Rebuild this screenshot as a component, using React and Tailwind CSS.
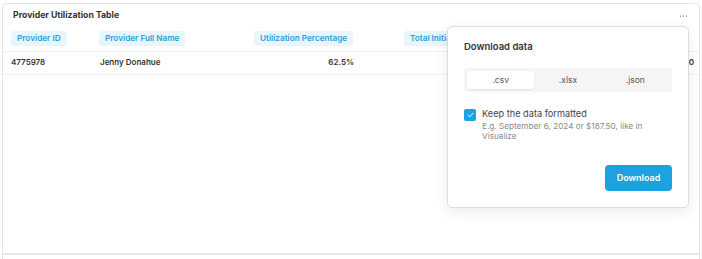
import React from "react";

const font = { fontFamily: "Inter, 'Noto Sans', sans-serif" };

function Pill({ children }) {
  return (
    <span className="flex h-[15px] items-center rounded-[3px] bg-[#e8f5fc] px-[6px] text-[8.2px] leading-none font-semibold text-[#2b9fd9] whitespace-nowrap">
      {children}
    </span>
  );
}

export default function App() {
  return (
    <div className="h-[259px] w-[702px] overflow-hidden bg-white pt-[3px]" style={font}>
      <div className="relative mx-[2px] flex h-[270px] flex-col rounded-t-[5px] border border-[#e3e3e3] bg-white">
        <div className="flex h-[24px] items-center justify-between pl-[10px] pr-[12px]">
          <span className="text-[8.7px] font-bold text-[#333]">Provider Utilization Table</span>
          <span className="flex gap-[1.5px]">
            <span className="h-[1.5px] w-[1.5px] rounded-full bg-[#9a9a9a]" />
            <span className="h-[1.5px] w-[1.5px] rounded-full bg-[#9a9a9a]" />
            <span className="h-[1.5px] w-[1.5px] rounded-full bg-[#9a9a9a]" />
          </span>
        </div>
        <div className="flex h-[24px] items-start border-b border-[#f0f0f0] pl-[8px] pt-[3px]">
          <div className="flex w-[88px]"><Pill>Provider ID</Pill></div>
          <div className="flex w-[155px]"><Pill>Provider Full Name</Pill></div>
          <div className="flex w-[150px]"><Pill>Utilization Percentage</Pill></div>
          <div className="flex w-[280px]"><Pill>Total Initial Visits</Pill></div>
        </div>
        <div className="flex h-[23px] items-start border-b border-[#f0f0f0] pl-[8px] pt-[4px] text-[8px] leading-[12px] font-semibold text-[#333]">
          <div className="w-[88px]">4775978</div>
          <div className="w-[155px] pl-[1px]">Jenny Donahue</div>
          <div className="w-[100px] text-right">62.5%</div>
          <div className="w-[340px] text-right">120</div>
        </div>
        <div className="flex-1" />
        <div className="h-[19px] border-t-2 border-[#e8e8e8]" />

        <div className="absolute left-[444px] top-[22px] flex h-[182px] w-[242px] flex-col rounded-[5px] border border-[#dcdcdc] bg-white px-[16px] shadow-[0_4px_14px_rgba(0,0,0,0.08)]">
          <div className="mt-[13px] text-[9.5px] font-semibold text-[#333]">Download data</div>
          <div className="mt-[14px] flex h-[24px] rounded-[3px] bg-[#f5f5f5] p-[3px] text-[8.5px] text-[#555]">
            <div className="flex flex-1 items-center justify-center rounded-[3px] bg-white shadow-[0_1px_2px_rgba(0,0,0,0.08)]">.csv</div>
            <div className="flex flex-1 items-center justify-center">.xlsx</div>
            <div className="flex flex-1 items-center justify-center">.json</div>
          </div>
          <div className="mt-[16px] flex items-start gap-[6px]">
            <div className="mt-[1px] flex h-[12px] w-[12px] shrink-0 items-center justify-center rounded-[2px] bg-[#1ea1dc]">
              <svg width="7" height="6" viewBox="0 0 7 6" fill="none">
                <path d="M1 3.2 L2.8 4.8 L6 1.2" stroke="white" strokeWidth="1" strokeLinecap="round" strokeLinejoin="round" />
              </svg>
            </div>
            <div className="flex flex-col">
              <span className="text-[9.2px] leading-[12px] text-[#444]">Keep the data formatted</span>
              <span className="mt-[1px] max-w-[170px] text-[8.2px] leading-[10px] text-[#8a8a8a]">E.g. September 6, 2024 or $187.50, like in Visualize</span>
            </div>
          </div>
          <div className="mt-auto mb-[16px] flex justify-end">
            <button className="h-[26px] w-[67px] rounded-[4px] bg-[#1da1e0] text-[9px] font-semibold text-white">Download</button>
          </div>
        </div>
      </div>
    </div>
  );
}
